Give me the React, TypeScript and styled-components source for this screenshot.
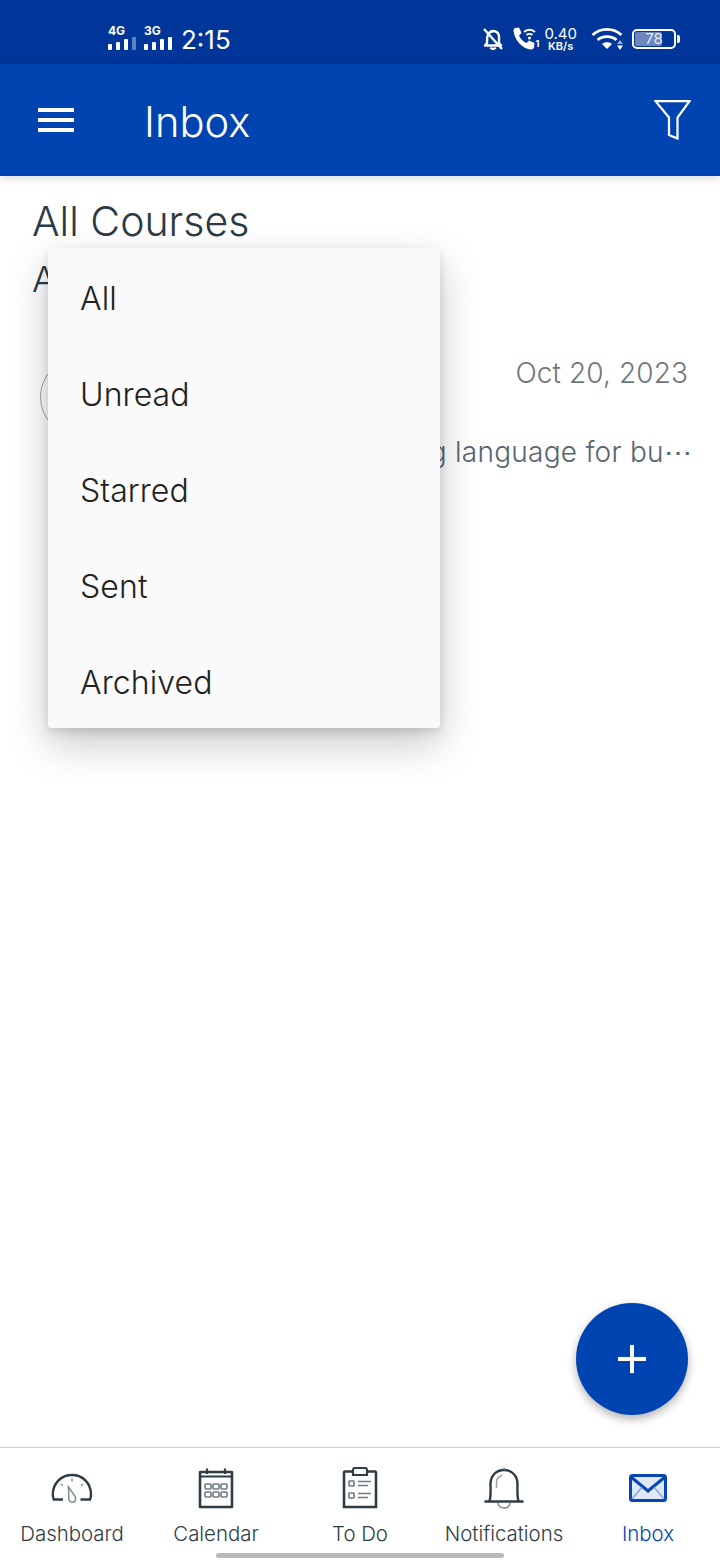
import React from 'react'
import styled, { createGlobalStyle } from 'styled-components'

const Global = createGlobalStyle`
  html, body {
    margin: 0;
    padding: 0;
    background: #ffffff;
  }
  * {
    box-sizing: border-box;
  }
`

const tabs = ['Dashboard', 'Calendar', 'To Do', 'Notifications', 'Inbox']
const filters = ['All', 'Unread', 'Starred', 'Sent', 'Archived']

const Signal = ({ label, dim }: { label: string; dim?: boolean }) => (
  <SignalBox>
    <SignalLabel>{label}</SignalLabel>
    <Bars>
      <Bar h={6} />
      <Bar h={8} />
      <Bar h={11} />
      <Bar h={13} faded={dim} />
    </Bars>
  </SignalBox>
)

const TabIcon = ({ name }: { name: string }) => {
  if (name === 'Dashboard') {
    return (
      <svg width="44" height="32" viewBox="0 0 44 32" fill="none">
        <path d="M13 27.500H3.800C3 25.500 2.800 24 2.800 22.500C2.800 11.500 11 3 22 3S41 11.500 41 22.500C41 24 40.800 25.500 40 27.500H30.500" stroke="#2e3c46" strokeWidth="2.400" />
        <path d="M18.500 15L25.500 25C26.300 28.500 24.500 30.300 22.300 30.300C20 30.300 18.500 28.500 18.800 26Z" stroke="#7f8a92" strokeWidth="1.500" />
        <path d="M22 6.500V9.500M11 12L12.800 13.800M33 12L31.200 13.800" stroke="#7f8a92" strokeWidth="1.400" />
      </svg>
    )
  }
  if (name === 'Calendar') {
    return (
      <svg width="36" height="42" viewBox="0 0 36 42" fill="none">
        <path d="M2 5H34V40H2Z" stroke="#2e3c46" strokeWidth="2.600" strokeLinejoin="round" />
        <path d="M2 9.500H34" stroke="#2e3c46" strokeWidth="2" />
        <path d="M9 1.500V7M27 1.500V7" stroke="#2e3c46" strokeWidth="2.200" />
        <g stroke="#6f7b84" strokeWidth="1.600">
          <rect x="7" y="17" width="6" height="5" rx="1" />
          <rect x="15" y="17" width="6" height="5" rx="1" />
          <rect x="23" y="17" width="6" height="5" rx="1" />
          <rect x="7" y="25" width="6" height="5" rx="1" />
          <rect x="15" y="25" width="6" height="5" rx="1" />
          <rect x="23" y="25" width="6" height="5" rx="1" />
        </g>
      </svg>
    )
  }
  if (name === 'To Do') {
    return (
      <svg width="36" height="42" viewBox="0 0 36 42" fill="none">
        <path d="M10 4.500H3C2.400 4.500 2 4.900 2 5.500V40H34V5.500C34 4.900 33.600 4.500 33 4.500H26" stroke="#2e3c46" strokeWidth="2.600" />
        <path d="M11 8V3C11 2 12 1 13 1H23C24 1 25 2 25 3V8Z" stroke="#2e3c46" strokeWidth="2.200" />
        <g stroke="#6f7b84" strokeWidth="1.600">
          <rect x="7" y="14" width="5" height="5" rx="0.500" />
          <rect x="7" y="26" width="5" height="5" rx="0.500" />
          <path d="M16 14.500H29M16 18.500H26M16 26.500H29M16 30.500H26" />
        </g>
      </svg>
    )
  }
  if (name === 'Notifications') {
    return (
      <svg width="40" height="42" viewBox="0 0 40 42" fill="none">
        <path d="M5.500 34C7 30 6.500 22 6.500 17C6.500 9 12 3 20 3S33.500 9 33.500 17C33.500 22 33 30 34.500 34" stroke="#2e3c46" strokeWidth="2.400" />
        <path d="M1.500 34.500H38.500" stroke="#2e3c46" strokeWidth="2.600" strokeLinecap="round" />
        <path d="M20 0.500V3" stroke="#7f8a92" strokeWidth="1.500" />
        <path d="M14 36C14.500 39.500 17 41 20 41S25.500 39.500 26 36" stroke="#7f8a92" strokeWidth="1.600" />
        <path d="M12.500 21V15.500C12.500 12 14.500 9.500 18 8.500" stroke="#9aa3aa" strokeWidth="1.500" />
      </svg>
    )
  }
  return (
    <svg width="38" height="28" viewBox="0 0 38 28" fill="none">
      <rect x="1.500" y="1.500" width="35" height="25" rx="2" fill="#dfe8f7" stroke="#0645b4" strokeWidth="3" />
      <path d="M2 3L19 17L36 3" stroke="#0645b4" strokeWidth="3" />
      <path d="M3 25L13 13M35 25L25 13" stroke="#8aa6da" strokeWidth="1.500" />
    </svg>
  )
}

const App = () => {
  return (
    <Page>
      <Global />
      <StatusBar>
        <StatusLeft>
          <Signal label="4G" dim />
          <Signal label="3G" />
          <Clock>2:15</Clock>
        </StatusLeft>
        <StatusRight>
          <svg width="22" height="24" viewBox="0 0 22 24" fill="none">
            <path d="M5 16C5 12 4.500 5 11 4C14 4 16.500 6 17 9V16L19 18.500H3Z" stroke="#fff" strokeWidth="2.400" strokeLinejoin="round" />
            <path d="M8.500 20.500C9.500 22.500 12.500 22.500 13.500 20.500" stroke="#fff" strokeWidth="2.400" />
            <path d="M2 2L20 22" stroke="#fff" strokeWidth="2.400" />
          </svg>
          <CallBox>
            <svg width="28" height="26" viewBox="0 0 28 26" fill="none">
              <path d="M3 2L7 1.500L9.500 7L7 9.500C8.500 13 11 15.500 14.500 17L17 14.500L22.500 17L22 21.500C21.500 23 20 23.500 18.500 23.500C10 22.500 2.500 14 1.500 5C1.500 3.500 2 2.500 3 2Z" fill="#fff" />
              <path d="M12 6C15 3 20 3 23 6M14.500 9C16 7.500 19 7.500 20.500 9" stroke="#fff" strokeWidth="1.800" />
              <circle cx="17.500" cy="12" r="1.500" fill="#fff" />
            </svg>
            <SimNumber>1</SimNumber>
          </CallBox>
          <Speed>
            <SpeedValue>0.40</SpeedValue>
            <SpeedUnit>KB/s</SpeedUnit>
          </Speed>
          <WifiBox>
            <svg width="32" height="24" viewBox="0 0 32 24" fill="none">
              <path d="M1.500 8C9.500 0.500 22.500 0.500 30.500 8" stroke="#fff" strokeWidth="2.800" />
              <path d="M6.500 13C11.500 8.500 20.500 8.500 25.500 13" stroke="#fff" strokeWidth="2.800" />
              <path d="M11 17C13.500 14.500 18.500 14.500 21 17L16 22Z" fill="#fff" />
              <path d="M29 13L32 17H26Z" fill="#fff" opacity="0.600" />
              <path d="M29 23L26 18.500H32Z" fill="#fff" />
            </svg>
          </WifiBox>
          <Battery>
            <BatteryShell>
              <BatteryFill style={{ width: '72%' }} />
              <BatteryText>78</BatteryText>
            </BatteryShell>
            <BatteryTip />
          </Battery>
        </StatusRight>
      </StatusBar>

      <AppBar>
        <Burger>
          <span />
          <span />
          <span />
        </Burger>
        <AppTitle>Inbox</AppTitle>
        <FilterButton>
          <svg width="37" height="40" viewBox="0 0 37 40" fill="none">
            <path d="M1.500 1.200H35.500L23.500 17.500V38.500L15 35V17.500Z" stroke="#fff" strokeWidth="2.200" />
          </svg>
        </FilterButton>
      </AppBar>

      <Content>
        <CourseTitle>All Courses</CourseTitle>
        <FilterTitle>All</FilterTitle>
        <MessageRow>
          <Avatar />
          <MessageBody>
            <MessageDate>Oct 20, 2023</MessageDate>
            <MessagePreview>Java is a programming language for bu⋯</MessagePreview>
          </MessageBody>
        </MessageRow>

        <Menu>
          {filters.map((item) => (
            <MenuItem key={item}>{item}</MenuItem>
          ))}
        </Menu>

        <Fab>
          <svg width="30" height="30" viewBox="0 0 30 30">
            <path d="M15 1V29M1 15H29" stroke="#fff" strokeWidth="4" />
          </svg>
        </Fab>
      </Content>

      <BottomNav>
        {tabs.map((tab) => (
          <Tab key={tab} active={tab === 'Inbox'}>
            <TabIconBox>
              <TabIcon name={tab} />
            </TabIconBox>
            {tab}
          </Tab>
        ))}
        <HomeBar />
      </BottomNav>
    </Page>
  )
}

export default App

const Page = styled.div`
  width: 720px;
  height: 1560px;
  display: flex;
  flex-direction: column;
  overflow: hidden;
  background: #ffffff;
  font-family: Inter, 'Liberation Sans', sans-serif;
`

const StatusBar = styled.div`
  height: 64px;
  flex: none;
  background: #003599;
  color: #ffffff;
  display: flex;
  align-items: center;
  justify-content: space-between;
  padding: 14px 40px 0 108px;
`

const StatusLeft = styled.div`
  display: flex;
  align-items: center;
  gap: 8px;
`

const SignalBox = styled.div`
  display: flex;
  flex-direction: column;
  width: 28px;
  margin-bottom: 4px;
`

const SignalLabel = styled.div`
  font-size: 12px;
  font-weight: 700;
  line-height: 12px;
`

const Bars = styled.div`
  display: flex;
  align-items: flex-end;
  gap: 4px;
  height: 13px;
`

const Bar = styled.div<{ h: number; faded?: boolean }>`
  width: 4px;
  height: ${({ h }) => h}px;
  background: ${({ faded }) => (faded ? '#5f82c4' : '#ffffff')};
  border-radius: 1px;
`

const Clock = styled.div`
  font-size: 26px;
  line-height: 30px;
  margin: 2px 0 0 1px;
`

const StatusRight = styled.div`
  display: flex;
  align-items: center;
`

const CallBox = styled.div`
  display: flex;
  align-items: flex-end;
  margin-left: 8px;
`

const SimNumber = styled.div`
  font-size: 9px;
  font-weight: 700;
  line-height: 9px;
  margin-left: -4px;
  margin-bottom: 4px;
`

const Speed = styled.div`
  display: flex;
  flex-direction: column;
  align-items: center;
  margin-left: 5px;
`

const SpeedValue = styled.div`
  font-size: 15px;
  line-height: 14px;
`

const SpeedUnit = styled.div`
  font-size: 11px;
  font-weight: 600;
  line-height: 11px;
`

const WifiBox = styled.div`
  display: flex;
  margin-left: 14px;
`

const Battery = styled.div`
  display: flex;
  align-items: center;
  margin-left: 9px;
`

const BatteryShell = styled.div`
  width: 44px;
  height: 20px;
  border: 2px solid #ffffff;
  border-radius: 5px;
  padding: 1px;
  display: flex;
  position: relative;
`

const BatteryFill = styled.div`
  background: #6d86bb;
  border-radius: 2px;
`

const BatteryText = styled.div`
  position: absolute;
  left: 0;
  right: 0;
  top: 0;
  text-align: center;
  font-size: 15px;
  line-height: 16px;
  color: #e6ebf5;
`

const BatteryTip = styled.div`
  width: 3px;
  height: 8px;
  margin-left: 1px;
  background: #ffffff;
  border-radius: 0 2px 2px 0;
`

const AppBar = styled.div`
  height: 112px;
  flex: none;
  background: #0044b2;
  color: #ffffff;
  display: flex;
  align-items: center;
  padding: 0 29px 0 38px;
  box-shadow: 0 2px 8px rgba(0, 0, 0, 0.15);
  position: relative;
  z-index: 1;
`

const Burger = styled.div`
  width: 36px;
  display: flex;
  flex-direction: column;
  gap: 6px;

  span {
    height: 4px;
    background: #ffffff;
  }
`

const AppTitle = styled.div`
  font-size: 41.6px;
  font-weight: 300;
  margin: 3px 0 0 70px;
  flex: 1;
`

const FilterButton = styled.div`
  display: flex;
`

const Content = styled.div`
  flex: 1;
  position: relative;
  padding: 22px 32px 0 32px;
  color: #2b3a44;
`

const CourseTitle = styled.div`
  font-size: 41px;
  font-weight: 300;
  line-height: 46px;
`

const FilterTitle = styled.div`
  font-size: 36px;
  font-weight: 300;
  line-height: 42px;
  margin-top: 14px;
`

const MessageRow = styled.div`
  display: flex;
  gap: 20px;
  margin-top: 57px;
  padding-left: 8px;
`

const Avatar = styled.div`
  width: 80px;
  height: 80px;
  border-radius: 50%;
  border: 1px solid #9ca3a8;
  flex: none;
`

const MessageBody = styled.div`
  flex: 1;
  min-width: 0;
  display: flex;
  flex-direction: column;
  align-items: flex-end;
`

const MessageDate = styled.div`
  font-size: 28px;
  font-weight: 300;
  line-height: 34px;
  letter-spacing: 0.1px;
  color: #6f777d;
  margin-top: -1px;
`

const MessagePreview = styled.div`
  font-size: 28px;
  font-weight: 300;
  line-height: 34px;
  letter-spacing: 0.25px;
  color: #56646e;
  margin-top: 45px;
  margin-right: -4px;
  white-space: nowrap;
`

const Menu = styled.div`
  position: absolute;
  left: 48px;
  top: 72px;
  width: 392px;
  background: #fafafa;
  border-radius: 4px;
  box-shadow: 0 16px 40px rgba(0, 0, 0, 0.22), 0 4px 10px rgba(0, 0, 0, 0.12);
`

const MenuItem = styled.div`
  height: 96px;
  display: flex;
  align-items: center;
  padding: 4px 0 0 32px;
  font-size: 32px;
  font-weight: 300;
  letter-spacing: 0.1px;
  color: #222222;
`

const Fab = styled.div`
  position: absolute;
  right: 32px;
  bottom: 32px;
  width: 112px;
  height: 112px;
  border-radius: 50%;
  background: #0044b2;
  display: flex;
  align-items: center;
  justify-content: center;
  box-shadow: 0 4px 10px rgba(0, 0, 0, 0.3);
`

const BottomNav = styled.div`
  height: 113px;
  flex: none;
  border-top: 1px solid #d0d0d0;
  display: grid;
  grid-template-columns: repeat(5, 144px);
  position: relative;
  background: #ffffff;
`

const Tab = styled.div<{ active?: boolean }>`
  display: flex;
  flex-direction: column;
  align-items: center;
  font-size: 20.4px;
  font-weight: 300;
  line-height: 26px;
  padding-top: 18px;
  color: ${({ active }) => (active ? '#0645b4' : '#2e3c46')};
`

const TabIconBox = styled.div`
  height: 44px;
  display: flex;
  align-items: center;
  justify-content: center;
  margin-bottom: 11px;
`

const HomeBar = styled.div`
  position: absolute;
  left: 216px;
  bottom: 2px;
  width: 288px;
  height: 5px;
  border-radius: 3px;
  background: #b9b9b9;
`
